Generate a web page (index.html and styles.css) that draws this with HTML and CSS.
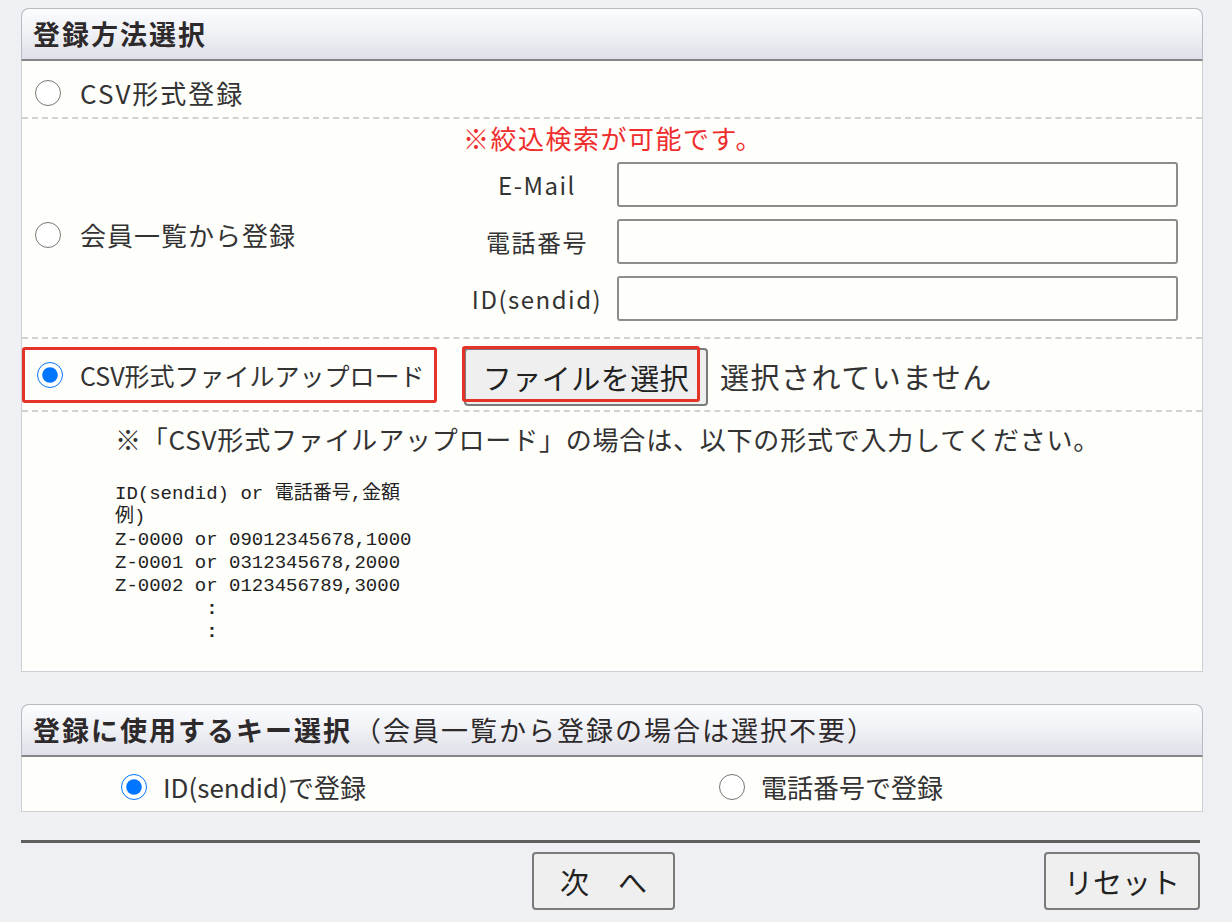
FILE: index.html
```html
<!DOCTYPE html>
<html lang="ja">
<head>
    <meta charset="UTF-8">
    <title>登録方法選択</title>
    <link rel="stylesheet" href="styles.css">
</head>
<body>

<!-- registration method -->
<div class="panel">
    <div class="panel-head">登録方法選択</div>
    <div class="panel-body">

        <div class="row row-csv">
            <label class="opt"><input type="radio" name="method">CSV形式登録</label>
        </div>

        <div class="row row-member">
            <div class="member-left">
                <label class="opt"><input type="radio" name="method">会員一覧から登録</label>
            </div>
            <div class="member-right">
                <p class="note-red">※絞込検索が可能です。</p>
                <div class="search">
                    <span class="search-label">E-Mail</span><input type="text" class="txt">
                    <span class="search-label">電話番号</span><input type="text" class="txt">
                    <span class="search-label">ID(sendid)</span><input type="text" class="txt">
                </div>
            </div>
        </div>

        <div class="row row-upload">
            <label class="opt mark"><input type="radio" name="method" checked>CSV形式ファイルアップロード</label>
            <span class="filepick"><button type="button" class="btn btn-file">ファイルを選択</button></span>
            <span class="file-none">選択されていません</span>
        </div>

        <div class="row row-help">
            <p class="help">※「CSV形式ファイルアップロード」の場合は、以下の形式で入力してください。</p>
<pre class="sample">ID(sendid) or 電話番号,金額
例)
Z-0000 or 09012345678,1000
Z-0001 or 0312345678,2000
Z-0002 or 0123456789,3000</pre>
<pre class="dots">        :
        :</pre>
        </div>

    </div>
</div>

<!-- key select -->
<div class="panel panel-key">
    <div class="panel-head">登録に使用するキー選択<span class="head-sub">（会員一覧から登録の場合は選択不要）</span></div>
    <div class="panel-body">
        <div class="key-row">
            <label class="opt"><input type="radio" name="key" checked>ID(sendid)で登録</label>
            <label class="opt"><input type="radio" name="key">電話番号で登録</label>
        </div>
    </div>
</div>

<div class="foot">
    <span></span>
    <button type="button" class="btn btn-next">次　へ</button>
    <button type="button" class="btn btn-reset">リセット</button>
</div>

</body>
</html>
```

FILE: styles.css
```css
body {
    margin: 0;
    padding: 8px 0 0 21px;
    width: 1182px;
    background: #eff0f4;
    font-family: "Noto Sans CJK JP", "Noto Sans", sans-serif;
    font-size: 26px;
    line-height: 30px;
    letter-spacing: 1px;
    color: #333;
}

p {
    margin: 0;
}

/* panels */
.panel-head {
    height: 50px;
    padding-left: 11px;
    border: 1px solid #b9bac2;
    border-bottom: 2px solid #85868c;
    border-radius: 8px 8px 0 0;
    background: linear-gradient(#fbfcfe, #f1f2f6 45%, #dfe0e8);
    font-size: 27px;
    font-weight: bold;
    line-height: 50px;
    letter-spacing: 2px;
    color: #2e2a2c;
    white-space: nowrap;
}
.head-sub {
    font-weight: normal;
    font-size: 27px;
    margin-left: 2px;
    letter-spacing: 2px;
}
.panel-body {
    background: #fefefb;
    border: 1px solid #cfd0d4;
    border-top: none;
}
.panel-key {
    margin-top: 32px;
}

.row {
    border-top: 2px dashed #d2d2d2;
}
.row:first-child {
    border-top: none;
}

/* radio + label */
.opt {
    display: inline-flex;
    align-items: center;
    color: #333;
    white-space: nowrap;
}
.opt input {
    width: 26px;
    height: 26px;
    margin: 0 19px 0 0;
}

.row-csv {
    height: 56px;
    padding: 0 0 0 13px;
    display: flex;
    align-items: center;
}
.row-csv .opt {
    padding-top: 8px;
    letter-spacing: 2px;
}

.row-member {
    display: flex;
    height: 218px;
}
.member-left {
    width: 441px;
    padding: 14px 0 0 13px;
    display: flex;
    align-items: center;
    box-sizing: border-box;
}
.member-right {
    padding-top: 4px;
}
.note-red {
    color: #ef2d2d;
    letter-spacing: 1.5px;
}
.search {
    display: grid;
    grid-template-columns: 148px 561px;
    column-gap: 6px;
    row-gap: 12px;
    margin-top: 9px;
    align-items: center;
}
.search-label {
    text-align: center;
    font-size: 24px;
    letter-spacing: 1.5px;
}
.txt {
    height: 45px;
    box-sizing: border-box;
    border: 2px solid #8d8d8d;
    border-radius: 3px;
    background: #fefefb;
    margin: 0;
}

/* upload row */
.row-upload {
    height: 71px;
    display: flex;
    align-items: center;
}
.mark {
    width: 415px;
    height: 56px;
    box-sizing: border-box;
    border: 3px solid #e5332a;
    border-radius: 3px;
    padding-left: 12px;
    margin-top: 1px;
    font-size: 25px;
    letter-spacing: 0;
}
.mark input {
    margin-right: 17px;
}
.filepick {
    position: relative;
    margin-left: 27px;
    margin-top: 5px;
}
.filepick:after {
    content: "";
    position: absolute;
    left: -2px;
    top: -2px;
    right: 8px;
    bottom: 4px;
    border: 3px solid #e5332a;
    border-radius: 3px;
}
.btn {
    font-family: "Noto Sans CJK JP", "Noto Sans", sans-serif;
    font-size: 29px;
    color: #222;
    background: #efefef;
    border: 2px solid #7a7a7a;
    border-radius: 4px;
    height: 58px;
    padding: 0 14px;
    margin: 0;
    white-space: nowrap;
}
.btn-file {
    width: 244px;
    display: block;
    letter-spacing: 0.5px;
}
.file-none {
    font-size: 29px;
    margin-left: 12px;
    margin-top: 2px;
    letter-spacing: 1.5px;
    white-space: nowrap;
}

/* help */
.row-help {
    height: 261px;
    padding: 12px 0 0 93px;
    box-sizing: border-box;
}
.help {
    font-size: 26px;
    letter-spacing: 0.8px;
    white-space: nowrap;
}
.sample {
    margin: 29px 0 0 0;
    font-family: "Liberation Mono", "Noto Sans CJK JP", monospace;
    font-size: 19px;
    line-height: 23px;
    letter-spacing: 0;
    color: #222;
}
.dots {
    margin: 0;
    font-family: "Liberation Mono", monospace;
    font-size: 19px;
    line-height: 23px;
    letter-spacing: 0;
    font-weight: bold;
    color: #222;
}

/* key select */
.key-row {
    display: grid;
    grid-template-columns: 598px 1fr;
    height: 54px;
    align-items: center;
    letter-spacing: 0;
}
.key-row .opt {
    padding: 6px 0 0 99px;
}
.key-row .opt input {
    margin-right: 16px;
}

/* footer */
.foot {
    margin-top: 28px;
    width: 1179px;
    border-top: 3px solid #606060;
    padding-top: 9px;
    display: grid;
    grid-template-columns: 1fr auto 1fr;
}
.btn-next {
    width: 143px;
    margin-right: 14px;
}
.btn-reset {
    justify-self: end;
    width: 156px;
}
```
